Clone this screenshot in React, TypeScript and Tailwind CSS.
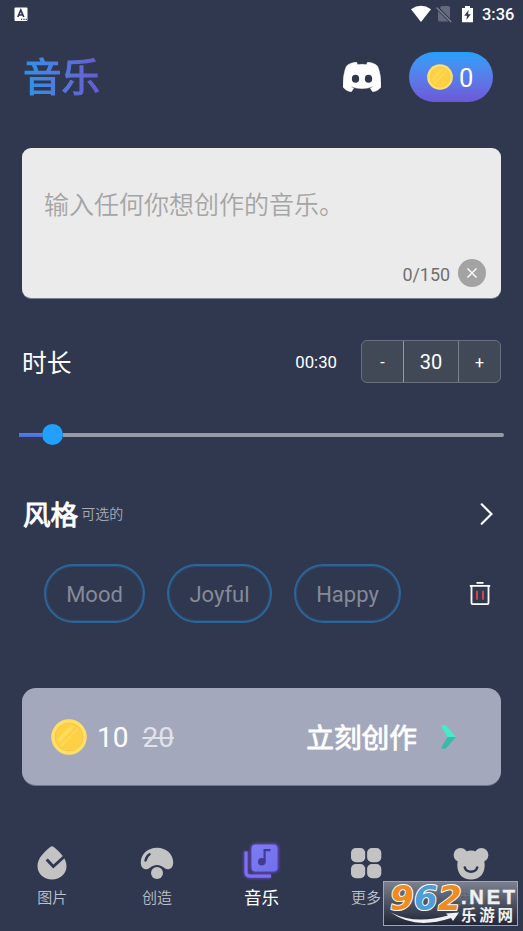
import React, { useState } from 'react';

const tags = [
  { name: 'Mood', width: 'w-[101px]' },
  { name: 'Joyful', width: 'w-[105px]' },
  { name: 'Happy', width: 'w-[107px]' },
];

const Coin = ({ size }: { size: number }) => (
  <svg width={size} height={size} viewBox="0 0 36 36">
    <circle cx="18" cy="18" r="17.8" fill="#ffe066" />
    <circle cx="18" cy="18" r="14" fill="#ffcf45" stroke="#f5c445" strokeWidth="0.8" />
    <path d="M6.5 20 L19 6.5 L24 7 L8.5 24 Z" fill="#ffda58" />
    <path d="M9 26.5 L27 8.5 L28 9.5 L10.3 28 Z" fill="#ffda58" />
  </svg>
);

const Discord = () => (
  <svg width="38" height="30" viewBox="0 0 114 90">
    <path
      d="M40 0 L27 3 Q14 7 10 13 C3 30 0 50 0 75 C6 83 14 88 25 89 L32 79 C27 77 25 75 24 73 C44 82 70 82 90 73 C89 75 87 77 82 79 L89 89 C100 88 108 83 114 75 C114 50 111 30 104 13 Q100 7 87 3 L74 0 L70 8 Q57 6 44 8 Z"
      fill="#fff"
      stroke="#fff"
      strokeWidth="1.5"
      strokeLinejoin="round"
    />
    <ellipse cx="37.5" cy="50" rx="11" ry="12" fill="#303850" />
    <ellipse cx="76.5" cy="50" rx="11" ry="12" fill="#303850" />
  </svg>
);

const StatusBar = () => (
  <div className="flex h-7 items-center justify-between pl-[14px] pr-[8px]">
    <svg width="14" height="15" viewBox="0 0 14 15">
      <rect x="0.5" y="0.5" width="13" height="13.5" rx="1" fill="#fff" />
      <path d="M3.8 10 L6.8 3.2 L9.8 10 M5 8 H8.6" stroke="#303850" strokeWidth="1.7" fill="none" />
      <path d="M7 12.4 h1.2 M9.4 12.4 h1.2 M11.6 12.4 h1.2" stroke="#303850" strokeWidth="1.2" />
    </svg>
    <div className="flex items-center">
      <svg width="22" height="18" viewBox="0 0 22 18">
        <path d="M1 4.2 Q11 -2.6 21 4.2 L11 17 Z" fill="#fff" />
      </svg>
      <svg className="ml-[4px]" width="16" height="18" viewBox="0 0 16 18">
        <path d="M5.5 1 H12.5 Q14 1 14 2.5 V13.5 L3.8 3 Z" fill="#646a7b" />
        <path d="M2 6 L12.5 16.5 H3.5 Q2 16.5 2 15 Z" fill="#646a7b" />
        <path d="M0.5 2.5 L15.3 17" stroke="#858996" strokeWidth="1.1" />
      </svg>
      <svg className="ml-[9px]" width="13" height="18" viewBox="0 0 13 18">
        <path d="M1 3 H4 V1 H9 V3 H12 V17.3 H1 Z" fill="#fff" />
        <path d="M7.6 5 L3.2 10.7 H6 L5.4 15 L9.8 9.2 H7.1 Z" fill="#303850" />
      </svg>
      <span className="ml-[8px] w-[33px] pt-[3px] text-[16.4px] leading-none font-medium text-white">3:36</span>
    </div>
  </div>
);

const Header = () => (
  <div className="flex h-[98px] items-center pl-[23px] pr-[30px]">
    <h1 className="bg-linear-to-r from-[#2793e8] to-[#665ad0] bg-clip-text pt-[2px] text-[38.5px] leading-[50px] text-transparent [-webkit-text-stroke:1.2px_transparent]">
      音乐
    </h1>
    <div className="ml-auto"><Discord /></div>
    <button className="ml-[28px] flex h-[50px] w-[84px] items-center rounded-full bg-linear-to-b from-[#22a0fb] to-[#6b58d8] pl-[18px] text-[25.5px] text-white">
      <Coin size={26} />
      <span className="ml-[6px] pt-[3px]">0</span>
    </button>
  </div>
);

const PromptBox = () => (
  <div className="mx-[22px] mt-[22px] flex h-[150px] flex-col rounded-[9px] bg-[#ebebeb] pt-[39px] pl-[22px] pr-[15px] shadow-[0_1px_0_#7c818f]">
    <p className="text-[25px] leading-[38px] font-[350] text-[#a5a5a5]">输入任何你想创作的音乐。</p>
    <div className="mt-[34px] flex items-center justify-end gap-[8px]">
      <span className="pt-[3px] text-[17.9px] leading-none text-[#707070]">0/150</span>
      <svg width="28" height="28" viewBox="0 0 28 28">
        <circle cx="14" cy="14" r="14" fill="#a3a3a3" />
        <path d="M9.5 9.5 L18.5 18.5 M18.5 9.5 L9.5 18.5" stroke="#fff" strokeWidth="1.4" />
      </svg>
    </div>
  </div>
);

const Trash = () => (
  <svg width="22" height="25" viewBox="0 0 22 25" fill="none">
    <path d="M7.5 1.8 H14.5 M0.8 4.8 H21.2" stroke="#fff" strokeWidth="1.8" />
    <path d="M2.5 5 V22 Q2.5 23.2 3.7 23.2 H18.3 Q19.5 23.2 19.5 22 V5" stroke="#fff" strokeWidth="1.8" />
    <path d="M8 9.7 V18.7 M14 9.7 V18.7" stroke="#e64d4d" strokeWidth="1.7" />
  </svg>
);

const DropIcon = () => (
  <svg width="30" height="36" viewBox="0 0 30 36">
    <path d="M15 1.2 Q13.8 1.2 12 3 C6 8.5 0.5 13.8 0.5 21 C0.5 29 7 34.5 15 34.5 C23 34.5 29.5 29 29.5 21 C29.5 13.8 24 8.5 18 3 Q16.2 1.2 15 1.2 Z" fill="#c3c3c3" />
    <path d="M9.7 14.5 L16.3 21.5 L28.5 10.5" stroke="#303850" strokeWidth="3" fill="none" />
  </svg>
);

const MushroomIcon = () => (
  <svg width="34" height="36" viewBox="0 0 34 36">
    <path d="M17 2.8 C7.5 2.8 0.8 9.5 0.8 17.4 C0.8 21.5 3 24.2 6.4 24.2 C10 24.2 11.5 20 17 20 C22.5 20 24 24.2 27.6 24.2 C31 24.2 33.2 21.5 33.2 17.4 C33.2 9.5 26.5 2.8 17 2.8 Z" fill="#c3c3c3" />
    <path d="M5.5 15.5 Q6.5 11 9.6 9.2" stroke="#303850" strokeWidth="2.4" strokeLinecap="round" fill="none" />
    <circle cx="17" cy="28" r="7.2" fill="#303850" />
    <circle cx="17" cy="28" r="6" fill="#c3c3c3" />
  </svg>
);

const MusicIcon = () => (
  <svg className="mb-[5px]" width="42" height="42" viewBox="0 0 42 42">
    <defs>
      <linearGradient id="note" x1="0" y1="0" x2="1" y2="1">
        <stop offset="0" stopColor="#7f7cf2" />
        <stop offset="1" stopColor="#6f70ee" />
      </linearGradient>
      <filter id="glow" x="-20%" y="-20%" width="140%" height="140%">
        <feGaussianBlur stdDeviation="1.3" />
      </filter>
    </defs>
    <g filter="url(#glow)" stroke="#6041b0" strokeWidth="2.5">
      <rect x="11.5" y="4.5" width="26.5" height="27" rx="4" fill="#6041b0" />
      <path d="M6 11 V32 Q6 36.2 10.5 36.2 H31" strokeWidth="5" fill="none" />
    </g>
    <path d="M6 11.5 V32 Q6 36.2 10.5 36.2 H31" stroke="#7774ee" strokeWidth="3.2" fill="none" />
    <rect x="11.5" y="4.5" width="26" height="27" rx="4" fill="url(#note)" />
    <circle cx="21.8" cy="21.8" r="3.8" fill="#443a91" />
    <path d="M24.6 22 V10.2 H30.5" stroke="#443a91" strokeWidth="2.2" fill="none" />
  </svg>
);

const GridIcon = () => (
  <svg width="32" height="36" viewBox="0 0 32 36" fill="#c3c3c3">
    <rect x="1" y="3" width="14.2" height="14.2" rx="4.8" />
    <rect x="17.1" y="3" width="14.2" height="14.2" rx="4.8" />
    <rect x="1" y="19" width="14.2" height="14.2" rx="4.8" />
    <rect x="17.1" y="19" width="14.2" height="14.2" rx="4.8" />
  </svg>
);

const BearIcon = () => (
  <svg width="36" height="36" viewBox="0 0 36 36" fill="#c3c3c3">
    <circle cx="7.6" cy="10" r="7" />
    <circle cx="28.4" cy="10" r="7" />
    <path d="M18 5.5 C25.5 5.5 31.7 12 31.7 20 C31.7 29 26.5 34.6 18 34.6 C9.5 34.6 4.3 29 4.3 20 C4.3 12 10.5 5.5 18 5.5 Z" />
    <path d="M11.8 22.5 Q13 26.7 18 26.7 Q23 26.7 24.2 22.5" stroke="#303850" strokeWidth="2.6" strokeLinecap="round" fill="none" />
  </svg>
);

const navItems = [
  { label: '图片', icon: <DropIcon /> },
  { label: '创造', icon: <MushroomIcon /> },
  { label: '音乐', icon: <MusicIcon />, active: true },
  { label: '更多', icon: <GridIcon /> },
  { label: '我的', icon: <BearIcon /> },
];

const BottomNav = () => (
  <div className="mt-[57px] grid h-[89px] grid-cols-5">
    {navItems.map((item) => (
      <div key={item.label} className="flex flex-col items-center">
        <div className="flex h-[42px] items-center">{item.icon}</div>
        <span className={item.active ? 'mt-[2px] text-[17.5px] leading-[24px] text-white' : 'mt-[2px] text-[15px] leading-[24px] font-[350] text-[#bfc1c8]'}>
          {item.label}
        </span>
      </div>
    ))}
  </div>
);

const SiteBadge = () => (
  <div className="absolute top-[881px] left-[383px] h-[45px] w-[135px] border border-[#a1a4ad] bg-linear-to-b from-[#858996]/90 to-[#202536]/90">
    <svg className="overflow-visible" width="133" height="43" viewBox="0 0 133 43">
      <g fontFamily="DejaVu Sans, sans-serif" fontWeight="bold" fontStyle="italic" fontSize="34" stroke="#fff" strokeWidth="2" paintOrder="stroke" strokeLinejoin="round">
        <text x="6" y="27.5" fill="#ef8b20">9</text>
        <text x="30" y="27.5" fill="#4c9dd8">6</text>
        <text x="54" y="27.5" fill="#ef8b20">2</text>
      </g>
      <path d="M7 30.5 Q31 43 64 33.5 L62 31.5 L75 30.5 L69 39 L67 36 Q31 48 7 30.5 Z" fill="#f1f1f1" />
      <text x="77" y="21.5" textLength="54" fontFamily="Liberation Sans, sans-serif" fontWeight="bold" fontSize="20" fill="#f0f0f0" stroke="#f0f0f0" strokeWidth="0.5">.NET</text>
      <text x="77" y="39" textLength="52" fontFamily="Noto Sans CJK SC, sans-serif" fontWeight="bold" fontSize="15.5" fill="#f0f0f0">乐游网</text>
    </svg>
  </div>
);

const App = () => {
  const [seconds, setSeconds] = useState(30);
  const time = `${String(Math.floor(seconds / 60)).padStart(2, '0')}:${String(seconds % 60).padStart(2, '0')}`;

  return (
    <div className="relative h-[931px] w-[523px] overflow-hidden bg-[#303850] font-['Roboto','Noto_Sans_CJK_SC',sans-serif]">
      <StatusBar />
      <Header />
      <PromptBox />

      <div className="mt-[42px] flex h-[43px] items-center pl-[22px] pr-[22px] text-white">
        <h2 className="pt-[4px] text-[24.8px] leading-[36px]">时长</h2>
        <span className="mr-[24px] ml-auto pt-[2px] text-[16.8px]">{time}</span>
        <div className="flex h-[43px] w-[140px] overflow-hidden rounded-[6px] border border-[#697080] bg-[#414957]">
          <button className="w-[42px] border-r border-[#959aa4] pt-[2px] text-[16px]" onClick={() => setSeconds(Math.max(1, seconds - 1))}>-</button>
          <span className="flex flex-1 items-center justify-center pt-px text-[20px]">{seconds}</span>
          <button className="w-[42px] border-l border-[#7c828e] pt-[2px] text-[16px]" onClick={() => setSeconds(seconds + 1)}>+</button>
        </div>
      </div>

      <div className="mt-[41px] mr-[19px] ml-[19px] flex h-[21px] items-center">
        <div className="h-1 w-[23px] bg-linear-to-b from-[#3c87eb] to-[#5a67dc]" />
        <div className="h-[21px] w-[21px] rounded-full bg-[#22a0fb]" />
        <div className="h-1 flex-1 rounded-r-full bg-[#969aa7]" />
      </div>

      <div className="mt-[49px] flex h-10 items-center pl-[23px] pr-[30px]">
        <h2 className="pt-[3px] text-[27.6px] leading-[40px] text-white [-webkit-text-stroke:0.9px_white]">风格</h2>
        <span className="ml-[3px] text-[14px] leading-5 font-[350] text-[#a7abb6]">可选的</span>
        <svg className="ml-auto" width="13" height="22" viewBox="0 0 13 22" fill="none">
          <path d="M1.7 1.3 L11.5 11 L1.7 20.7" stroke="#fff" strokeWidth="2.2" strokeLinecap="round" />
        </svg>
      </div>

      <div className="mt-[30px] flex h-[59px] items-center gap-[22px] pr-[32px] pl-[44px]">
        {tags.map((tag) => (
          <button key={tag.name} className={`${tag.width} h-[59px] rounded-full border-2 border-[#2c6599] pt-[2px] text-[22px] text-[#858a98] inset-ring inset-ring-[#2c6599]/40`}>
            {tag.name}
          </button>
        ))}
        <div className="ml-auto"><Trash /></div>
      </div>

      <button className="mx-[22px] mt-[65px] flex h-[97px] w-[479px] items-center rounded-[14px] bg-[#a4a8bd] pl-[29px] pr-[44px] text-white shadow-[0_1px_0_#6f758a]">
        <Coin size={36} />
        <span className="ml-[10px] pt-[3px] text-[28px]">10</span>
        <span className="ml-[14px] pt-[3px] text-[28px] text-[#e0e2e8] line-through decoration-2">20</span>
        <span className="ml-auto pt-[4px] text-[27.7px] leading-[40px] [-webkit-text-stroke:0.8px_white]">立刻创作</span>
        <svg className="ml-[23px]" width="17" height="26" viewBox="0 0 17 26">
          <path d="M1 2 Q3.5 0.3 6 1.5 L16 13 H7.5 Z" fill="#45ebcb" />
          <path d="M1 24 Q3.5 25.7 6 24.5 L16 13 H7.5 Z" fill="#3cb9ab" />
        </svg>
      </button>

      <BottomNav />
      <SiteBadge />
    </div>
  );
};

export default App;
